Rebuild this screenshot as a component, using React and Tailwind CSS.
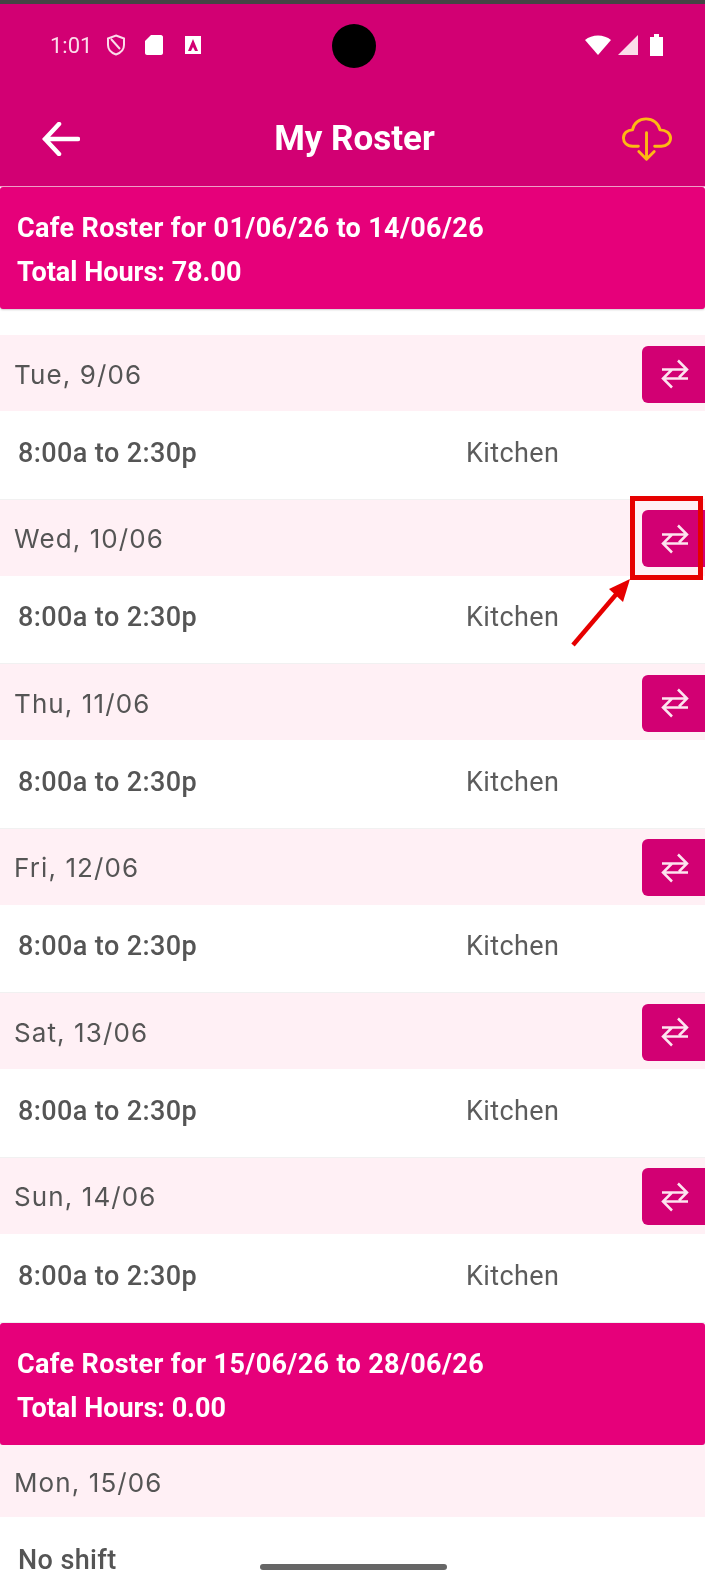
import React from "react";

const shifts = ["Tue, 9/06", "Wed, 10/06", "Thu, 11/06", "Fri, 12/06", "Sat, 13/06", "Sun, 14/06"];

const SwapIcon = () => (
  <svg className="ml-[3px]" width="28" height="32" viewBox="0 0 28 32" fill="none" stroke="#fde4ef" strokeWidth="2.500">
    <path d="M1 11.500H26M17 2.500L26 11.500L18 19.500M2 20.500H27M11 11.500L2 20.500L11 29.500" />
  </svg>
);

const CloudIcon = () => (
  <svg width="50" height="45" viewBox="0 0 52 46" fill="none" stroke="#fdb913" strokeWidth="3" strokeLinecap="round" strokeLinejoin="round">
    <path d="M17 30H11C5 30 1.500 26 1.500 21.500C1.500 16.500 5.500 13 11 13C12 6 18 1.500 25 1.500C32 1.500 38 6 39.500 13C45.500 13 50.500 16.500 50.500 21.500C50.500 26.500 46.500 30 41 30H34" />
    <path d="M25.500 16V43M17.500 35.500L25.500 43.500L33.500 35.500" />
  </svg>
);

const Banner = ({ title, hours }) => (
  <div className="h-[122px] bg-[#e6007a] rounded-[3px] px-[17px] pt-[19px] text-white font-[Roboto,sans-serif] font-bold text-[27px] leading-[44px] shadow-[0_1px_2px_rgba(0,0,0,0.2)]">
    <div className="tracking-[0.35px]">{title}</div>
    <div>{hours}</div>
  </div>
);

const DayHeader = ({ day }) => (
  <div className="h-[76px] bg-[#fff0f5] flex items-center justify-between pt-[2px]">
    <span className="pl-[14px] font-[Inter,sans-serif] text-[26px] tracking-[1.1px] text-[#555]">{day}</span>
    <div className="w-[63px] h-[57px] bg-[#d20073] rounded-l-[6px] flex items-center justify-center">
      <SwapIcon />
    </div>
  </div>
);

const ShiftRow = () => (
  <div className="h-[88.600px] border-b border-[#f1f1f1] flex items-center px-[18px] pb-[4px] font-[Roboto,sans-serif] text-[27px] tracking-[0.4px]">
    <span className="w-[448px] font-medium text-[#555]">8:00a to 2:30p</span>
    <span className="text-[#5c5c5c]">Kitchen</span>
  </div>
);

export default function App() {
  return (
    <div className="relative w-[705px] h-[1580px] overflow-hidden bg-white">
      <div className="blur-[0.5px]">
        <div className="h-[4px] bg-[#444]" />
        <header className="h-[183px] bg-[#d20073] border-b border-[#f0a0c8] text-white">
          <div className="relative h-[84px] flex items-center justify-between pl-[50px] pr-[41px] pb-[2px]">
            <div className="flex items-center gap-[11px] text-[#fbdcea] font-[Roboto,sans-serif] text-[22px]">
              <span>1:01</span>
              <svg className="ml-[3px]" width="20" height="24" viewBox="0 0 20 22" fill="none" stroke="currentColor" strokeWidth="2">
                <path d="M10 1.500L18 4.500V11C18 16 14.500 19 10 20.500C5.500 19 2 16 2 11V4.500Z M5 5L14 15" />
              </svg>
              <svg className="ml-[7px]" width="20" height="22" viewBox="0 0 20 22" fill="#fff">
                <path d="M7 1H17C18 1 19 2 19 3V19C19 20 18 21 17 21H3C2 21 1 20 1 19V7Z" />
              </svg>
              <svg className="ml-[8px]" width="20" height="20" viewBox="0 0 20 20">
                <path fill="#fff" fillRule="evenodd" d="M2 1H18V19H2ZM10 4L5 16H8L10 12L12 16H15Z" />
              </svg>
            </div>
            <div className="w-[44px] h-[44px] rounded-full bg-black absolute left-[332px] top-[20px]" />
            <div className="flex items-center gap-[7px]">
              <svg width="26" height="20" viewBox="0 0 26 20" fill="#fff"><path d="M0 5C7 -1 19 -1 26 5L13 20Z" /></svg>
              <svg width="20" height="20" viewBox="0 0 20 20" fill="#fbdcea"><path d="M20 0V20H0Z" /></svg>
              <svg className="ml-[4px]" width="15" height="22" viewBox="0 0 15 22" fill="#fff"><path d="M1 3H5V0H10V3H14V22H1Z" /></svg>
            </div>
          </div>
          <div className="relative h-[98px] flex items-center justify-between pl-[42px] pr-[33px] pt-[4px]">
            <svg width="38" height="34" viewBox="0 0 38 34" fill="none" stroke="#fff" strokeWidth="4.500" strokeLinecap="round">
              <path d="M3 17H36M17 2L3 17L17 32" />
            </svg>
            <h1 className="font-[Roboto,sans-serif] font-bold text-[35px] ml-[7px]">My Roster</h1>
            <CloudIcon />
          </div>
        </header>

        <Banner title="Cafe Roster for 01/06/26 to 14/06/26" hours="Total Hours: 78.00" />

        <div className="pt-[26px]">
          {shifts.map((day) => (
            <div key={day}>
              <DayHeader day={day} />
              <ShiftRow />
            </div>
          ))}
        </div>

        <Banner title="Cafe Roster for 15/06/26 to 28/06/26" hours="Total Hours: 0.00" />
        <div className="h-[72px] bg-[#fff0f5] flex items-center pl-[14px] pt-[3px] font-[Inter,sans-serif] text-[26px] tracking-[1.1px] text-[#555]">Mon, 15/06</div>
        <div className="h-[84px] flex items-center px-[18px] pt-[3px] font-[Roboto,sans-serif] font-medium text-[27px] tracking-[0.4px] text-[#555]">No shift</div>
      </div>

      <div className="absolute left-[260px] top-[1564px] w-[187px] h-[6px] rounded-full bg-[#666]" />

      {/* red annotation */}
      <div className="absolute left-[630px] top-[496px] w-[73px] h-[84px] border-[5px] border-[#e60000]" />
      <svg className="absolute left-[565px] top-[575px]" width="70" height="75" viewBox="0 0 70 75">
        <path d="M8 70L54 16" stroke="#e60000" strokeWidth="4.500" />
        <path d="M65 4L44 14L58 27Z" fill="#e60000" />
      </svg>
    </div>
  );
}
